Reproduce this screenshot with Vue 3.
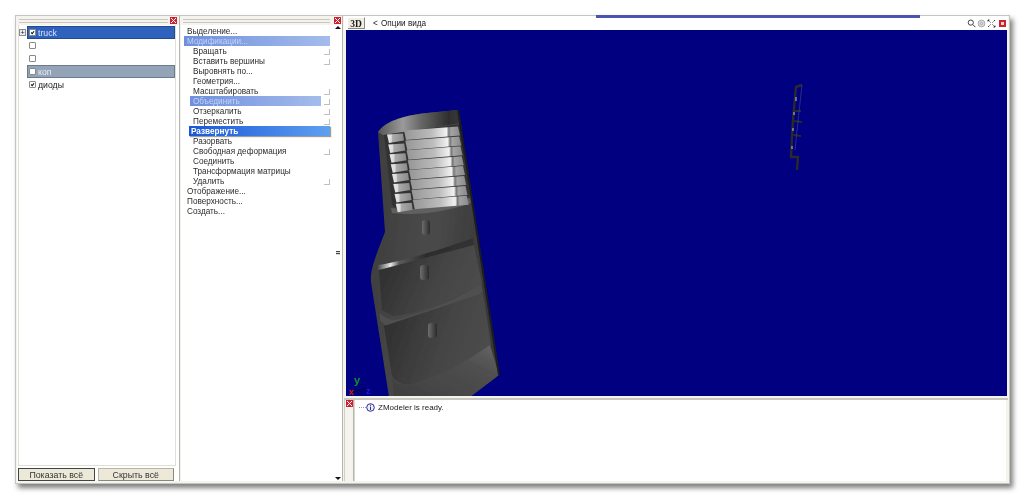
<template>
  <div class="shot">
    <div class="window">
      <div class="top-strip"></div>

      <section class="panel panel-tree">
        <div class="grip">
          <span class="grip-lines"></span>
          <span class="close-btn"><svg viewBox="0 0 7 7"><path d="M1 1l5 5M6 1l-5 5" /></svg></span>
        </div>
        <div class="tree">
          <div v-for="row in treeRows" :key="row.id" class="tree-row">
            <span class="expander"><span v-if="row.expand">+</span></span>
            <div class="tree-item" :class="row.state">
              <span class="check">
                <svg v-if="row.checked" viewBox="0 0 9 9"><path d="M2 4.5l2 2 3.2-4.2" /></svg>
              </span>
              <span class="tree-label">{{ row.label }}</span>
            </div>
          </div>
        </div>
        <div class="tree-buttons">
          <button class="btn btn-default">Показать всё</button>
          <button class="btn">Скрыть всё</button>
        </div>
      </section>

      <section class="panel panel-menu">
        <div class="grip grip-menu">
          <span class="grip-lines"></span>
          <span class="close-btn"><svg viewBox="0 0 7 7"><path d="M1 1l5 5M6 1l-5 5" /></svg></span>
        </div>
        <div class="menu-body">
          <div class="menu">
            <div v-for="item in menuItems" :key="item.label" class="menu-row" :class="[item.state, { sub: item.sub }]">
              <span class="menu-label">{{ item.label }}</span>
              <span v-if="item.opt" class="opt"></span>
            </div>
          </div>
          <div class="scroll">
            <span class="arrow-up"></span>
            <span class="thumb"></span>
            <span class="arrow-down"></span>
          </div>
        </div>
      </section>

      <section class="panel-view">
        <div class="view-bar">
          <span class="btn-3d">3D</span>
          <span class="back">&lt;</span>
          <span class="view-title">Опции вида</span>
          <div class="view-icons">
            <svg viewBox="0 0 9 9" class="tool"><circle cx="3.8" cy="3.6" r="2.6" /><path d="M5.8 5.6l2.6 2.6" /></svg>
            <svg viewBox="0 0 9 9" class="tool light"><circle cx="4.5" cy="4.5" r="3.4" /><circle cx="4.5" cy="4.5" r="1.2" /></svg>
            <svg viewBox="0 0 9 9" class="tool dashed"><path d="M1 1l2.5 2.5M8 1L5.5 3.5M1 8l2.5-2.5M8 8L5.5 5.5M1 1h2M1 1v2M8 8H6M8 8V6" /></svg>
            <span class="stop"></span>
          </div>
        </div>

        <div class="viewport">
          <svg class="scene" viewBox="346 30 661 366">
            <defs>
              <linearGradient id="bodyFill" x1="0" y1="0" x2="1" y2="0.25">
                <stop offset="0" stop-color="#3c3c3c" />
                <stop offset="0.55" stop-color="#4a4a4a" />
                <stop offset="1" stop-color="#383838" />
              </linearGradient>
              <linearGradient id="rimFill" x1="0" y1="0" x2="1" y2="0">
                <stop offset="0" stop-color="#565656" />
                <stop offset="0.3" stop-color="#9a9a9a" />
                <stop offset="0.5" stop-color="#6a6a6a" />
                <stop offset="0.85" stop-color="#2e2e2e" />
                <stop offset="1" stop-color="#3a3a3a" />
              </linearGradient>
              <linearGradient id="ventBar" x1="0" y1="0" x2="1" y2="0">
                <stop offset="0" stop-color="#969696" />
                <stop offset="0.5" stop-color="#bdbdbd" />
                <stop offset="0.76" stop-color="#f2f2f2" />
                <stop offset="0.8" stop-color="#777" />
                <stop offset="0.84" stop-color="#a4a4a4" />
                <stop offset="1" stop-color="#8a8a8a" />
              </linearGradient>
              <linearGradient id="tabFill" x1="0" y1="0" x2="1" y2="0">
                <stop offset="0" stop-color="#e8e8e8" />
                <stop offset="0.25" stop-color="#dcdcdc" />
                <stop offset="0.33" stop-color="#ababab" />
                <stop offset="1" stop-color="#8a8a8a" />
              </linearGradient>
              <linearGradient id="shine" x1="0" y1="0" x2="1" y2="0">
                <stop offset="0" stop-color="#4a4a4a" />
                <stop offset="0.13" stop-color="#e8e8e8" />
                <stop offset="0.22" stop-color="#5a5a5a" />
                <stop offset="0.5" stop-color="#2c2c2c" />
                <stop offset="1" stop-color="#333" />
              </linearGradient>
              <linearGradient id="lowerFill" x1="0" y1="0" x2="1" y2="0.3">
                <stop offset="0" stop-color="#2b2b2b" />
                <stop offset="0.6" stop-color="#434343" />
                <stop offset="1" stop-color="#4b4b4b" />
              </linearGradient>
              <linearGradient id="skirtFill" x1="0" y1="1" x2="1" y2="0">
                <stop offset="0" stop-color="#3e3e3e" />
                <stop offset="0.7" stop-color="#505050" />
                <stop offset="1" stop-color="#666" />
              </linearGradient>
              <linearGradient id="knob" x1="0" y1="0" x2="1" y2="0">
                <stop offset="0" stop-color="#6e6e6e" />
                <stop offset="1" stop-color="#2a2a2a" />
              </linearGradient>
              <filter id="soft" x="-5%" y="-5%" width="110%" height="110%">
                <feGaussianBlur stdDeviation="0.6" />
              </filter>
            </defs>

            <!-- door panel -->
            <g filter="url(#soft)">
              <path d="M378 132C385 122 400 116 427 113L458 110L475 220L499 375L470 397L389 397L371 282C370 270 375 258 385 232Z" fill="url(#bodyFill)" />
              <path d="M378 132C385 122 400 116 427 113L458 110L461 123L383 135Z" fill="url(#rimFill)" />
              <path d="M384 135L461 124L470 196C445 205 420 210 398 210L392 205Z" fill="#333" />
              <path d="M391 208C420 212 445 206 470 198L471 203C445 212 420 216 392 213Z" fill="#606060" />

              <g v-for="vent in vents" :key="vent.y">
                <path :d="vent.bar" fill="url(#ventBar)" />
                <path :d="vent.tab" fill="url(#tabFill)" />
              </g>

              <!-- upper crease with its highlight -->
              <path d="M378 265C400 262 440 250 473 238L474 245C445 256 410 267 378 270Z" fill="url(#shine)" />
              <path d="M379 270L474 245L482 284C450 302 420 314 393 316L382 310Z" fill="url(#lowerFill)" />
              <path d="M380 313C385 319 392 321 400 319C430 311 460 297 481 284L483 292C460 308 430 320 400 326C390 328 383 325 380 320Z" fill="#505050" />
              <path d="M384 326L483 293L491 345C465 362 440 376 413 384C403 386 396 382 392 376Z" fill="url(#lowerFill)" />
              <path d="M392 378C396 384 403 386 413 384C440 376 465 362 490 345L499 375L470 397L394 397Z" fill="url(#skirtFill)" />
              <path d="M458 110L475 220L499 375" fill="none" stroke="#1d1d1d" stroke-width="2" />

              <rect x="422" y="220" width="8" height="15" rx="3" fill="url(#knob)" />
              <rect x="420" y="265" width="9" height="15" rx="3" fill="url(#knob)" />
              <rect x="428" y="323" width="9" height="15" rx="3" fill="url(#knob)" />

              <!-- second, distant view of the model -->
              <path d="M802 85L796 87L793 120L792 137L791 157L798 157L797 170" fill="none" stroke="#2a2a2a" stroke-width="2.4" />
              <path d="M793 111L801 111M793 121L802 122M793 135L801 136" stroke="#2a2a2a" stroke-width="1.8" />
              <path d="M802 85L799 112L795 150" fill="none" stroke="#3e3e8a" stroke-width="0.7" />
              <path d="M796 97v4M794 112v3M793 128v3M792 146v3" stroke="#c8c8c8" stroke-width="1" />
            </g>

            <!-- axes -->
            <path d="M351 393L366 388" stroke="#000" stroke-width="0.8" fill="none" />
            <text x="354" y="384" class="axis axis-y">y</text>
            <text x="349" y="395" class="axis axis-x">x</text>
            <text x="366" y="394" class="axis axis-z">z</text>
          </svg>
        </div>

        <div class="log-panel">
          <div class="log-side">
            <span class="close-btn"><svg viewBox="0 0 7 7"><path d="M1 1l5 5M6 1l-5 5" /></svg></span>
          </div>
          <div class="log-body">
            <div class="log-row">
              <span class="dots"></span>
              <svg class="info" viewBox="0 0 9 9"><circle cx="4.5" cy="4.5" r="3.8" /><path d="M4.5 3.6v3.4M4.5 1.8v1" /></svg>
              <span>ZModeler is ready.</span>
            </div>
          </div>
        </div>
      </section>
    </div>
  </div>
</template>

<script setup>
const treeRows = [
  { id: 1, label: 'truck', checked: true, expand: true, state: 'selected' },
  { id: 2, label: '', checked: false },
  { id: 3, label: '', checked: false },
  { id: 4, label: 'коп', checked: false, state: 'muted' },
  { id: 5, label: 'диоды', checked: true }
]

const menuItems = [
  { label: 'Выделение...' },
  { label: 'Модификации...', state: 'soft wide' },
  { label: 'Вращать', sub: true, opt: true },
  { label: 'Вставить вершины', sub: true, opt: true },
  { label: 'Выровнять по...', sub: true },
  { label: 'Геометрия...', sub: true },
  { label: 'Масштабировать', sub: true, opt: true },
  { label: 'Объединить', sub: true, opt: true, state: 'soft narrow' },
  { label: 'Отзеркалить', sub: true, opt: true },
  { label: 'Переместить', sub: true, opt: true },
  { label: 'Развернуть', sub: true, state: 'active' },
  { label: 'Разорвать', sub: true },
  { label: 'Свободная деформация', sub: true, opt: true },
  { label: 'Соединить', sub: true },
  { label: 'Трансформация матрицы', sub: true },
  { label: 'Удалить', sub: true, opt: true },
  { label: 'Отображение...' },
  { label: 'Поверхность...' },
  { label: 'Создать...' }
]

// eight vent slats, each one a little lower and further right
const vents = Array.from({ length: 8 }, (_, i) => {
  const dx = i * 1.25
  const y = i * 9.9
  const bar = `M${404 + dx} ${130.5 + y}L${458 + dx} ${126.5 + y}L${460 + dx} ${135.5 + y}L${406 + dx} ${140 + y}Z`
  const tab = `M${387 + dx} ${134.5 + y}L${403 + dx} ${133.5 + y}L${404 + dx} ${140.5 + y}L${389 + dx} ${143 + y}Z`
  return { y, bar, tab }
})
</script>

<style scoped>
.shot {
  width: 1024px;
  height: 501px;
  box-sizing: border-box;
  padding: 15px 14px 17px 15px;
  background: #fff;
  overflow: hidden;
  font-family: "Liberation Sans", Arial, sans-serif;
  font-size: 8.2px;
  color: #1a1a1a;
  filter: blur(0.3px);
}

.window {
  position: relative;
  display: flex;
  height: 100%;
  box-sizing: border-box;
  padding: 0 1px 2px 1px;
  gap: 1px;
  background: #f4f3ee;
  border: 1px solid #c4c4c0;
  box-shadow: 3px 4px 5px rgba(0, 0, 0, 0.5);
}

.top-strip {
  position: absolute;
  left: 580px;
  top: -1px;
  width: 324px;
  height: 3px;
  background: #4a53ad;
}

.panel {
  display: flex;
  flex-direction: column;
  background: #fff;
  border-right: 1px solid #b5b5b0;
}

.panel-tree {
  width: 162px;
  flex: none;
}

.panel-menu {
  width: 161px;
  flex: none;
}

.grip {
  display: flex;
  align-items: center;
  height: 9px;
  padding: 0 2px;
  flex: none;
  background: #f4f3ee;
}

.grip-lines {
  flex: 1;
  height: 2px;
  margin-right: 2px;
  border-top: 1px solid #c8c8c0;
  border-bottom: 1px solid #c8c8c0;
}

.grip-menu {
  padding-right: 1px;
}

.grip-menu .grip-lines {
  margin-right: 4px;
}

.close-btn {
  display: block;
  width: 7px;
  height: 7px;
  background: #cf2030;
  flex: none;
}

.close-btn svg {
  display: block;
  width: 7px;
  height: 7px;
  fill: none;
  stroke: #fff;
  stroke-width: 1;
}

.tree {
  flex: 1;
  margin: 0 3px 2px 1px;
  background: #fff;
  border: 1px solid #e0dfd6;
  border-top: 0;
  padding-top: 1px;
}

.tree-row {
  display: flex;
  align-items: center;
  height: 13px;
}

.expander {
  width: 8px;
  flex: none;
  height: 7px;
}

.expander span {
  display: block;
  width: 5px;
  height: 5px;
  line-height: 5px;
  font-size: 7px;
  text-align: center;
  border: 1px solid #8a8a8a;
  background: #eee;
}

.tree-item {
  flex: 1;
  display: flex;
  align-items: center;
  gap: 2px;
  height: 13px;
  padding-left: 1px;
  box-sizing: border-box;
  font-size: 8.7px;
  border: 1px solid transparent;
}

.tree-item.selected {
  background: #2f62bd;
  color: #d8e4f8;
  border-color: #24498e;
}

.tree-item.muted {
  background: #93a3b8;
  color: #e8ecf2;
  border-color: #6c7a8c;
}

.check {
  display: block;
  width: 5px;
  height: 5px;
  border: 1px solid #8a8a84;
  border-radius: 1px;
  background: #fff;
  flex: none;
}

.check svg {
  display: block;
  width: 5px;
  height: 5px;
  fill: none;
  stroke: #111;
  stroke-width: 2;
}

.tree-buttons {
  display: flex;
  gap: 3px;
  padding: 0 5px 0 1px;
  flex: none;
}

.btn {
  flex: 1;
  height: 13px;
  padding: 0;
  font: 8.8px "Liberation Sans", Arial, sans-serif;
  color: #333;
  background: #ece9d8;
  border: 1px solid #b9b6a6;
  border-right-color: #8a887c;
  border-bottom-color: #8a887c;
}

.btn-default {
  border: 1px solid #444;
}

.menu-body {
  flex: 1;
  display: flex;
  min-height: 0;
  margin-top: 1px;
}

.menu {
  flex: 1;
  padding-left: 3px;
}

.menu-row {
  position: relative;
  display: flex;
  align-items: center;
  height: 10px;
  line-height: 10px;
  padding-left: 3px;
  color: #2c2c2c;
}

.menu-row.sub {
  padding-left: 9px;
}

.menu-label {
  position: relative;
  top: 1px;
}

.opt {
  position: absolute;
  left: 140px;
  top: 3px;
  width: 5px;
  height: 5px;
  border-right: 1px solid #c0c0b8;
  border-bottom: 1px solid #c0c0b8;
}

.soft {
  background: linear-gradient(90deg, #6f8fdc, #a4bcec);
  color: #c3d3f5;
}

.soft.wide {
  margin-right: 3px;
}

.menu-row.soft.narrow {
  margin-left: 6px;
  margin-right: 12px;
  padding-left: 3px;
}

.soft.narrow .opt {
  left: 134px;
}

.menu-row.active {
  margin-left: 5px;
  margin-right: 3px;
  padding-left: 2px;
  background: linear-gradient(90deg, #1a57d8, #5fa0f0);
  color: #fff;
  font-weight: 700;
  box-shadow: 1px 1px 1px rgba(60, 60, 60, 0.5);
}

.scroll {
  width: 9px;
  flex: none;
  display: flex;
  flex-direction: column;
  align-items: center;
  justify-content: space-between;
  padding-bottom: 1px;
}

.arrow-up {
  width: 0;
  height: 0;
  border-left: 3px solid transparent;
  border-right: 3px solid transparent;
  border-bottom: 3px solid #111;
}

.arrow-down {
  width: 0;
  height: 0;
  border-left: 3px solid transparent;
  border-right: 3px solid transparent;
  border-top: 3px solid #111;
}

.thumb {
  width: 4px;
  height: 4px;
  background: repeating-linear-gradient(180deg, #444 0 1px, #ddd 1px 2px);
}

.panel-view {
  flex: 1;
  min-width: 0;
  display: flex;
  flex-direction: column;
  background: #f4f3ee;
}

.view-bar {
  display: flex;
  align-items: center;
  height: 14px;
  flex: none;
  background: #fff;
  padding-left: 4px;
}

.btn-3d {
  width: 17px;
  height: 12px;
  line-height: 12px;
  text-align: center;
  font-family: "Liberation Serif", serif;
  font-weight: 700;
  font-size: 9.5px;
  background: #f1efe4;
  border-right: 1px solid #888;
  border-bottom: 1px solid #888;
  border-top: 1px solid #fff;
  box-sizing: border-box;
  flex: none;
}

.back {
  margin-left: 8px;
  width: 8px;
}

.view-icons {
  margin-left: auto;
  display: flex;
  align-items: center;
  gap: 1px;
  padding-right: 2px;
}

.tool {
  width: 9px;
  height: 9px;
  fill: none;
  stroke: #444;
  stroke-width: 1;
}

.tool.light {
  stroke: #aaa;
  fill: #ddd;
}

.tool.dashed {
  stroke-dasharray: 1.5 0.7;
  stroke: #333;
}

.stop {
  display: block;
  width: 3px;
  height: 3px;
  margin-left: 2px;
  background: #f4d0d0;
  border: 2px solid #d0202a;
}

.viewport {
  height: 366px;
  flex: none;
  margin: 0 1px 0 2px;
  background: #000080;
  overflow: hidden;
}

.scene {
  display: block;
  width: 100%;
  height: 100%;
}

.axis {
  font-family: "Liberation Sans", Arial, sans-serif;
  font-size: 11px;
  font-weight: 700;
}

.axis-y { fill: #0a9a2a; }
.axis-x { fill: #e01818; font-size: 9px; }
.axis-z { fill: #1818e0; font-size: 9px; }

.log-panel {
  flex: 1;
  display: flex;
  margin-top: 2px;
  border-top: 2px solid #c8c8c0;
}

.log-side {
  width: 10px;
  flex: none;
  display: flex;
  justify-content: center;
  border-left: 1px solid #d0d0c8;
  border-right: 1px solid #b5b5b0;
  box-sizing: border-box;
}

.log-body {
  flex: 1;
  margin-right: 2px;
  background: #fff;
  border-left: 1px solid #d8d8d0;
}

.log-row {
  display: flex;
  align-items: center;
  height: 12px;
  margin-top: 1px;
  padding-left: 4px;
  font-size: 8px;
}

.dots {
  width: 7px;
  border-top: 1px dotted #999;
}

.info {
  width: 9px;
  height: 9px;
  margin-right: 3px;
  fill: #eef0ff;
  stroke: #2a2a9a;
  stroke-width: 1;
}
</style>

<style>
html, body { background: #fff; }
</style>
